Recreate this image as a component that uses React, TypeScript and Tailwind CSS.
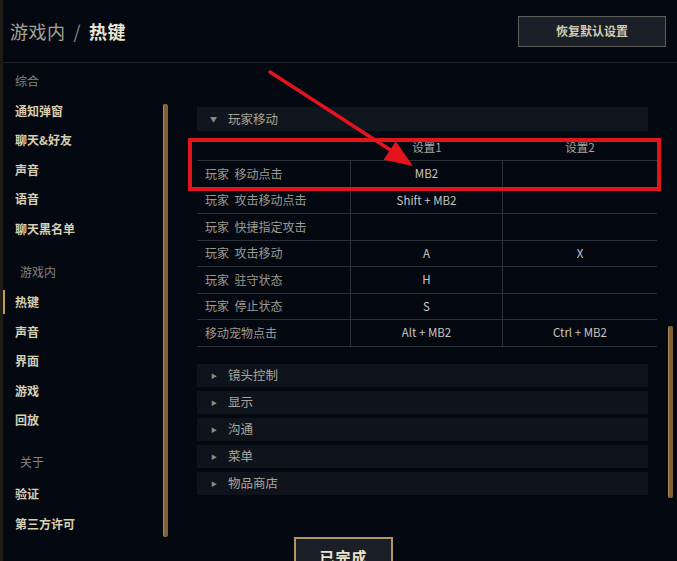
import React from 'react';

const font = { fontFamily: '"Noto Sans CJK SC", "Noto Sans", sans-serif' };

type NavItem = { label: string; group?: boolean; active?: boolean };

const navItems: NavItem[] = [
  { label: '综合', group: true },
  { label: '通知弹窗' },
  { label: '聊天&好友' },
  { label: '声音' },
  { label: '语音' },
  { label: '聊天黑名单' },
  { label: '游戏内', group: true },
  { label: '热键', active: true },
  { label: '声音' },
  { label: '界面' },
  { label: '游戏' },
  { label: '回放' },
  { label: '关于', group: true },
  { label: '验证' },
  { label: '第三方许可' },
];

const bindings = [
  { name: '玩家 移动点击', key1: 'MB2', key2: '' },
  { name: '玩家 攻击移动点击', key1: 'Shift + MB2', key2: '' },
  { name: '玩家 快捷指定攻击', key1: '', key2: '' },
  { name: '玩家 攻击移动', key1: 'A', key2: 'X' },
  { name: '玩家 驻守状态', key1: 'H', key2: '' },
  { name: '玩家 停止状态', key1: 'S', key2: '' },
  { name: '移动宠物点击', key1: 'Alt + MB2', key2: 'Ctrl + MB2' },
];

const sections = ['镜头控制', '显示', '沟通', '菜单', '物品商店'];

const groupClass = (i: number) => {
  if (i === 0) return 'h-[30px] pl-[12px]';
  if (i === 6) return 'h-[31px] pl-[17px] mt-[13px]';
  return 'h-[34px] pl-[17px] mt-[10px]';
};

const App = () => {
  return (
    <div
      className="relative w-[677px] h-[561px] overflow-hidden bg-[#040911] border-l-[3px] border-[#1f1c16]"
      style={font}
    >
      {/* Header */}
      <header className="h-[63px] flex items-center justify-between pl-[7px] pr-[11px] border-b border-[#1c222a]">
        <h1 className="text-[18px] leading-none tracking-[0.5px]">
          <span className="text-[#a7a399]">游戏内</span>
          <span className="text-[#8a877f] mx-[8px]">/</span>
          <span className="text-[#ece5d2] font-bold">热键</span>
        </h1>
        <button className="w-[148px] h-[31px] bg-[#1b2028] border border-[#5f5e5a] text-[#d6cdb2] text-[12px] font-bold">
          恢复默认设置
        </button>
      </header>

      {/* Body */}
      <div className="flex h-[472px]">
        <nav className="w-[160px] pt-[3px]">
          {navItems.map((item, i) =>
            item.group ? (
              <div
                key={i}
                className={`flex items-center text-[12px] text-[#85837d] ${groupClass(i)}`}
              >
                {item.label}
              </div>
            ) : (
              <div
                key={i}
                className={`relative flex items-center pl-[12px] text-[12px] font-bold text-[#d8cfb4] ${i > 12 ? 'h-[30px]' : 'h-[29.5px]'}`}
              >
                {item.active && (
                  <span className="absolute left-[-2px] top-[2px] w-[4px] h-[24px] bg-[#c29a52]" />
                )}
                {item.label}
              </div>
            )
          )}
        </nav>

        {/* sidebar scrollbar */}
        <div className="mt-[41px] w-[5px] h-[433px] rounded-[2px] bg-[#7e6235] border-l border-[#a98a55]" />

        <main className="ml-[29px] w-[460px] pt-[44px]">
          <div className="w-[451px] h-[24px] bg-[#10161e] flex items-center text-[12.5px] text-[#a8a59c]">
            <span className="w-[31px] pl-[13px] text-[7px] text-[#8d8b84]">▼</span>
            {'玩家移动'}
          </div>

          <div className="mt-[5px] text-[11.5px]">
            <div className="grid grid-cols-[154px_152px_154px] h-[25px] items-center border-b border-[#2b3038] text-[#a9a69e]">
              <div />
              <div className="text-center">设置1</div>
              <div className="text-center">设置2</div>
            </div>
            {bindings.map((b, i) => (
              <div
                key={i}
                className="grid grid-cols-[154px_152px_154px] h-[26.5px] border-b border-[#2b3038]"
              >
                <div className="flex items-center pl-[8px] border-r border-[#2b3038] text-[12px] text-[#9d9a92] whitespace-pre">
                  {b.name.replace(' ', '  ')}
                </div>
                <div className="flex items-center justify-center border-r border-[#2b3038] text-[#c9c6c0]">
                  {b.key1}
                </div>
                <div className="flex items-center justify-center text-[#c9c6c0]">{b.key2}</div>
              </div>
            ))}
          </div>

          <div className="mt-[17px] flex flex-col gap-[4px]">
            {sections.map((s) => (
              <div
                key={s}
                className="w-[451px] h-[23px] bg-[#0f141c] flex items-center text-[12.5px] text-[#a8a59c]"
              >
                <span className="w-[31px] pl-[14px] text-[6px] text-[#8d8b84]">▶</span>
                {s}
              </div>
            ))}
          </div>
        </main>

        {/* content scrollbar */}
        <div className="ml-[11px] mt-[263px] w-[5px] h-[172px] rounded-[2px] bg-[#7e6235] border-l border-[#a98a55]" />
      </div>

      {/* Footer */}
      <footer className="flex justify-center pl-[7px] pt-[2px]">
        <button className="w-[99px] h-[36px] bg-[#1a1f27] border-2 border-[#b19863] text-[#ece3cc] text-[15px] font-bold tracking-[1px] leading-none pt-[2px]">
          已完成
        </button>
      </footer>

      {/* Annotation: red box and arrow */}
      <div className="absolute left-[185px] top-[138px] w-[473px] h-[53px] border-[4px] border-[#e3141c] pointer-events-none" />
      <svg className="absolute left-0 top-0 w-[674px] h-[561px] pointer-events-none" viewBox="3 0 674 561">
        <line x1="270" y1="72" x2="392" y2="151" stroke="#e3141c" strokeWidth="3.5" strokeLinecap="round" />
        <polygon points="413,166 383.6,159.7 395.8,141.3" fill="#e3141c" />
      </svg>
    </div>
  );
};

export default App;
